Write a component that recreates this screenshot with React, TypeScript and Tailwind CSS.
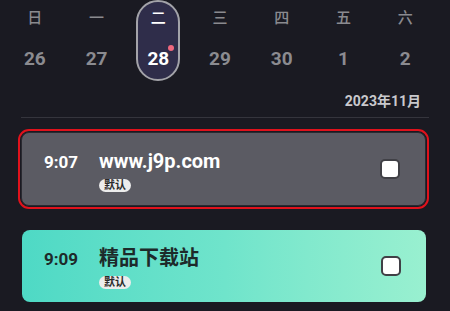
import React from 'react';

const days = [
  { w: '日', d: '26' },
  { w: '一', d: '27' },
  { w: '二', d: '28', active: true },
  { w: '三', d: '29' },
  { w: '四', d: '30' },
  { w: '五', d: '1' },
  { w: '六', d: '2' },
];

const font = { fontFamily: 'Roboto, "Noto Sans CJK SC", sans-serif' };

function Checkbox() {
  return <div className="w-[20px] h-[20px] rounded-[5px] border-2 border-[#404046] bg-white shrink-0" />;
}

function Badge() {
  return (
    <span className="inline-flex items-center h-[13px] px-[5px] rounded-full bg-[#ececec] text-[#2a2a2a] text-[11px] leading-none font-bold">
      默认
    </span>
  );
}

function EventRow({ time, title, dark }: { time: string; title: string; dark?: boolean }) {
  const color = dark ? 'text-[#1d2a2a]' : 'text-white';
  return (
    <div className="flex items-center h-full pl-[22px] pr-[25px]">
      <div className="flex-1 flex flex-col pt-[3px]">
        <div className={`flex items-baseline ${color}`}>
          <span className="w-[55px] text-[17px] font-bold leading-[24px]">{time}</span>
          <span className="text-[20px] font-bold leading-[24px]">{title}</span>
        </div>
        <div className="pl-[55px] mt-[5px] flex">
          <Badge />
        </div>
      </div>
      <Checkbox />
    </div>
  );
}

export default function App() {
  return (
    <div className="w-[450px] h-[311px] bg-[#1a1a22] overflow-hidden" style={font}>
      <div className="grid grid-cols-7 w-[432px] ml-[4px] h-[82px]">
        {days.map((day) => (
          <div key={day.w} className="flex justify-center">
            <div
              className={`relative w-[44px] h-[81px] rounded-full border-2 flex flex-col items-center pt-[9px] ${
                day.active ? 'border-[#a3a3a9] bg-[#2f2d4a]' : 'border-transparent'
              }`}
            >
              <span
                className={`text-[15px] leading-[15px] font-medium ${day.active ? 'text-white' : 'text-[#8a8a8f]'}`}
              >
                {day.w}
              </span>
              <span
                className={`mt-[23px] text-[19px] leading-[19px] font-bold ${
                  day.active ? 'text-white' : 'text-[#8b8b90]'
                }`}
              >
                {day.d}
              </span>
              {day.active && (
                <span className="absolute left-[30px] top-[43px] w-[6px] h-[6px] rounded-full bg-[#f0687e]" />
              )}
            </div>
          </div>
        ))}
      </div>

      <div className="mt-[11px] pr-[29px] flex justify-end">
        <span className="text-[14px] leading-[16px] font-bold text-[#c9c9cd]">2023年11月</span>
      </div>

      <div className="mt-[8px] mx-[21px] h-px bg-[#35353d]" />

      <div className="mt-[11px] ml-[18px] w-[411px] rounded-[11px] border-2 border-[#e0121c] p-px">
        <div className="h-[74px] rounded-[8px] border border-[#2a2a31] bg-[#5b5b63]">
          <EventRow time="9:07" title="www.j9p.com" />
        </div>
      </div>

      <div className="mt-[21px] ml-[22px] w-[404px] h-[72px] rounded-[8px] bg-gradient-to-r from-[#4ed9c5] via-[#6fe4cb] to-[#99f0d0]">
        <EventRow time="9:09" title="精品下载站" dark />
      </div>
    </div>
  );
}
